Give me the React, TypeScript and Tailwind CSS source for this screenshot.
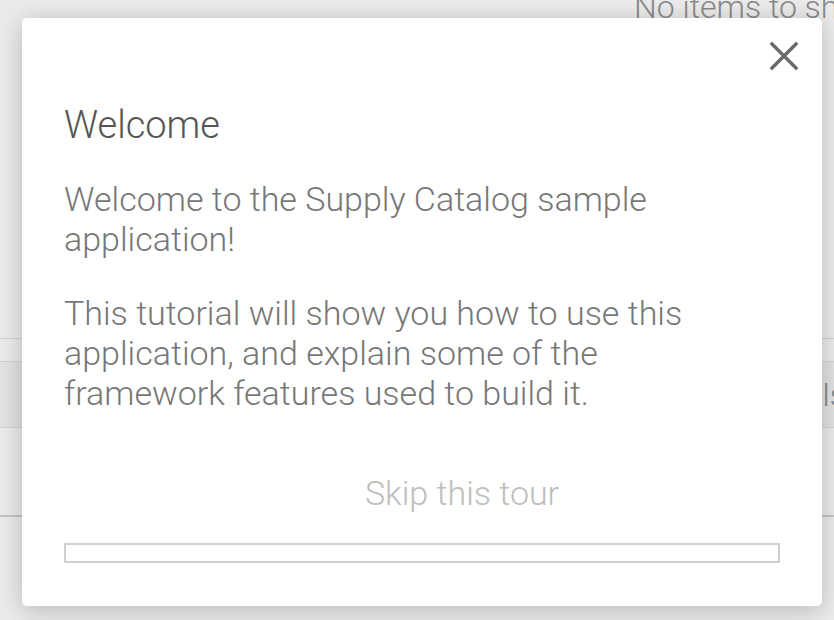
import React from "react";

const App = () => {
  return (
    <div
      className="relative w-[834px] h-[620px] overflow-hidden bg-[#ebebeb]"
      style={{ fontFamily: "Roboto, 'Liberation Sans', sans-serif" }}
    >
      {/* page behind the tour dialog */}
      <div className="flex flex-col text-[#8a8a8a]">
        <div className="h-[338px] flex justify-start pl-[634px]">
          <div className="mt-[-17px] text-[32px] font-light whitespace-nowrap">
            No items to show
          </div>
        </div>
        <div className="h-[23px] border-t border-[#d2d2d2]" />
        <div className="h-[67px] border-t border-b border-[#d2d2d2] bg-[#e2e2e2] flex items-center justify-end">
          <span className="mr-[-12px] text-[32px] font-light text-[#888]">ls</span>
        </div>
        <div className="h-[89px] border-b-2 border-[#c4c4c4]" />
      </div>

      {/* tour dialog */}
      <div className="absolute left-[22px] top-[18px] w-[800px] h-[588px] bg-white rounded-[5px] shadow-[0_4px_24px_rgba(0,0,0,0.22)]">
        <button className="absolute right-[22px] top-[22px] w-[32px] h-[32px] flex items-center justify-center text-[#6b6b6b]">
          <svg width="32" height="32" viewBox="0 0 32 32" fill="none" stroke="currentColor" strokeWidth="3.4" strokeLinecap="square">
            <path d="M4 4 L28 28 M28 4 L4 28" />
          </svg>
        </button>

        <div className="flex flex-col px-[42px] pt-[87px] font-light">
          <h1 className="text-[38px] leading-[40px] text-[#555] font-light">Welcome</h1>
          <p className="mt-[34px] w-[640px] text-[34px] leading-[40px] text-[#777]">
            Welcome to the Supply Catalog sample application!
          </p>
          <p className="mt-[34px] w-[640px] text-[34px] leading-[40px] text-[#777]">
            This tutorial will show you how to use this application, and explain some of the framework features used to build it.
          </p>
          <div className="mt-[60px] flex justify-center pl-[80px]">
            <button className="text-[34px] leading-[40px] text-[#bdbdbd] font-light">Skip this tour</button>
          </div>
          <div className="mt-[30px] h-[20px] border-2 border-[#d0d0d0]" />
        </div>
      </div>
    </div>
  );
};

export default App;
